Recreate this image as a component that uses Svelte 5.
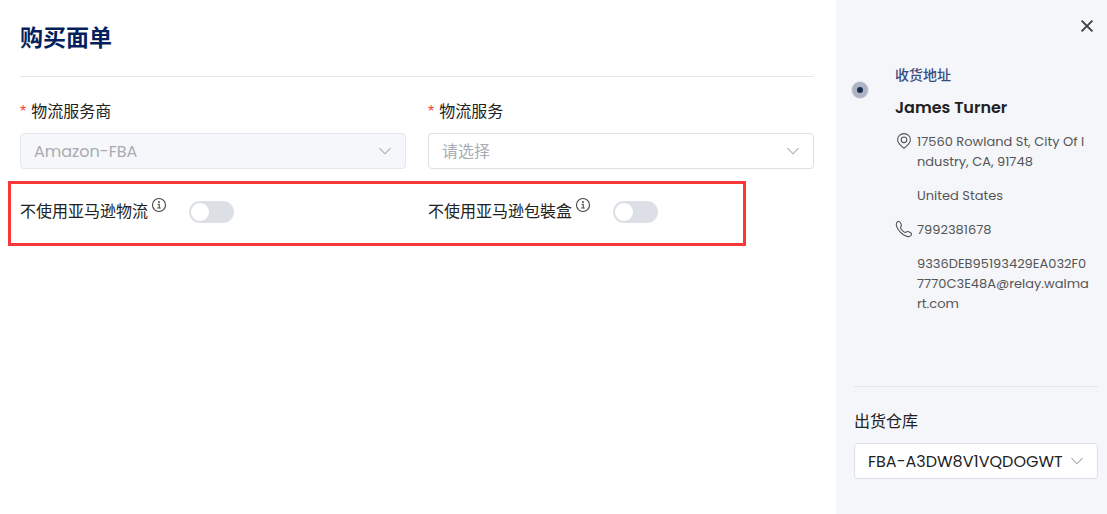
<script>
    let carrier = "Amazon-FBA"
    let service = ""
    let warehouse = "FBA-A3DW8V1VQDOGWT"

    let switches = [
        { id: "no-logistics", label: "不使用亚马逊物流", checked: false },
        { id: "no-box", label: "不使用亚马逊包裝盒", checked: false }
    ]

    const address = {
        name: "James Turner",
        street: "17560 Rowland St, City Of Industry, CA, 91748",
        country: "United States",
        phone: "7992381678",
        email: "9336DEB95193429EA032F07770C3E48A@relay.walmart.com"
    }
</script>

{#snippet arrow()}
    <svg class="arrow" viewBox="0 0 14 14" aria-hidden="true">
        <path d="M1.5 4.2 L7 9.8 L12.5 4.2" />
    </svg>
{/snippet}

<div class="dialog">
    <main>
        <h1>购买面单</h1>

        <form>
            <div class="field">
                <label class="required" for="carrier">物流服务商</label>
                <div class="select">
                    <select id="carrier" bind:value={carrier} disabled>
                        <option>Amazon-FBA</option>
                    </select>
                    {@render arrow()}
                </div>
            </div>
            <div class="field">
                <label class="required" for="service">物流服务</label>
                <div class="select">
                    <select id="service" class:empty={service === ""} bind:value={service}>
                        <option value="">请选择</option>
                    </select>
                    {@render arrow()}
                </div>
            </div>

            <div class="switches">
                {#each switches as item}
                    <div class="switch">
                        <label for={item.id}>{item.label}</label>
                        <svg class="info" viewBox="0 0 16 16" aria-hidden="true">
                            <circle cx="8" cy="8" r="6.5" />
                            <path d="M6.6 7.2 H8.2 V11 M6.3 11 H9.8" />
                            <circle class="fill" cx="8" cy="5" r="0.9" />
                        </svg>
                        <input id={item.id} type="checkbox" role="switch" bind:checked={item.checked}>
                    </div>
                {/each}
            </div>
        </form>
    </main>

    <aside>
        <button class="close" type="button" aria-label="关闭">
            <svg viewBox="0 0 14 14"><path d="M1.6 1.6 L12.4 12.4 M12.4 1.6 L1.6 12.4" /></svg>
        </button>

        <section class="receiver">
            <span class="dot"></span>
            <div class="details">
                <h2>收货地址</h2>
                <h3>{address.name}</h3>
                <div class="line">
                    <svg viewBox="0 0 16 16" aria-hidden="true">
                        <path d="M8 15.4 C5.6 13.4 1.6 10.4 1.6 6.8 A6.4 6.2 0 0 1 14.4 6.8 C14.4 10.4 10.4 13.4 8 15.4 Z" />
                        <circle cx="8" cy="6.8" r="2.8" />
                    </svg>
                    <p>{address.street}</p>
                </div>
                <div class="line">
                    <p>{address.country}</p>
                </div>
                <div class="line">
                    <svg viewBox="0 0 16 16" aria-hidden="true">
                        <path d="M1.2 1.1 C2.3 0 3.6 0.3 4.3 1.5 L5.2 3.2 C5.8 4.4 5.4 5.3 4.5 6 C4.2 6.7 5 8 6.2 9.3 C7.5 10.6 8.9 11.6 9.8 11.4 C10.5 10.5 11.6 10.3 12.7 10.8 L14.6 11.8 C15.7 12.5 15.9 13.7 14.9 14.7 C13.6 15.9 11.6 15.8 9.4 14.7 C6 13 2.7 9.7 1.1 6.4 C0.1 4.3 0 2.3 1.2 1.1 Z" />
                    </svg>
                    <p>{address.phone}</p>
                </div>
                <div class="line">
                    <p>{address.email}</p>
                </div>
            </div>
        </section>

        <section class="warehouse">
            <label for="warehouse">出货仓库</label>
            <div class="select">
                <select id="warehouse" bind:value={warehouse}>
                    <option>FBA-A3DW8V1VQDOGWT</option>
                </select>
                {@render arrow()}
            </div>
        </section>
    </aside>
</div>

<style>
    :global(body) {
        margin: 0;
        background: #fff;
    }

    .dialog {
        display: flex;
        min-height: 100vh;
        font-family: Poppins, Inter, "Noto Sans CJK SC", sans-serif;
        font-size: 16px;
        line-height: 24px;
        color: #222;
    }

    main {
        flex: 1;
        min-width: 0;
        padding: 21px 22px 20px 20px;
    }

    h1 {
        margin: 0;
        padding-bottom: 21px;
        border-bottom: 1px solid #e6e6e6;
        font-size: 23px;
        line-height: 34px;
        font-weight: 700;
        color: #051f5c;
    }

    form {
        display: grid;
        grid-template-columns: 1fr 1fr;
        column-gap: 22px;
        padding-top: 23px;
    }

    .field label,
    .warehouse label {
        display: block;
        margin-bottom: 9px;
    }

    .required::before {
        content: "*";
        margin-right: 5px;
        font-family: "Liberation Sans", sans-serif;
        color: #f5483b;
    }

    .select {
        display: flex;
        align-items: center;
        position: relative;
    }

    select {
        appearance: none;
        width: 100%;
        height: 36px;
        padding: 2px 32px 0 13px;
        border: 1px solid #dcdfe6;
        border-radius: 4px;
        background: #fff;
        font: inherit;
        color: #222;
        opacity: 1;
    }

    select.empty {
        color: #a8abb2;
    }

    select:disabled {
        background: #f5f7fa;
        border-color: #e4e7ed;
        color: #a8abb2;
        opacity: 1;
    }

    .arrow {
        position: absolute;
        right: 14px;
        width: 14px;
        height: 14px;
        fill: none;
        stroke: #a8abb2;
        stroke-width: 1.1;
        pointer-events: none;
    }

    .switches {
        grid-column: 1 / -1;
        display: grid;
        grid-template-columns: 1fr 1fr;
        column-gap: 22px;
        position: relative;
        padding: 28px 0 19px;
    }

    /* highlight frame around both switches */
    .switches::after {
        content: "";
        position: absolute;
        inset: 12px 68px 0 -12px;
        border: 3px solid #fb3737;
        pointer-events: none;
    }

    .switch {
        display: flex;
        align-items: center;
        height: 30px;
    }

    .info {
        align-self: flex-start;
        width: 16px;
        height: 16px;
        margin: 0 22px 0 3px;
        fill: none;
        stroke: #444;
        stroke-width: 1.1;
    }

    .info .fill {
        fill: #444;
        stroke: none;
    }

    input {
        appearance: none;
        display: flex;
        box-sizing: border-box;
        width: 45px;
        height: 22px;
        margin: 0;
        padding: 2px;
        border-radius: 11px;
        background: #dcdfe6;
        cursor: pointer;
    }

    input::before {
        content: "";
        width: 18px;
        height: 18px;
        border-radius: 50%;
        background: #fff;
    }

    input:checked {
        justify-content: flex-end;
        background: #051f5c;
    }

    aside {
        display: flex;
        flex-direction: column;
        box-sizing: border-box;
        width: 271px;
        padding: 16px 9px 20px 16px;
        background: #f4f6fa;
    }

    .close {
        align-self: flex-end;
        display: flex;
        padding: 3px;
        border: 0;
        margin-right: 1px;
        background: none;
        cursor: pointer;
    }

    .close svg {
        width: 14px;
        height: 14px;
        fill: none;
        stroke: #444;
        stroke-width: 2;
    }

    .receiver {
        display: flex;
        gap: 27px;
        min-height: 321px;
        padding-top: 29px;
    }

    .dot {
        flex: none;
        box-sizing: border-box;
        width: 16px;
        height: 16px;
        margin-top: 17px;
        border: 5px solid #aeb4c3;
        border-radius: 50%;
        background: #1c2c55;
        box-shadow: 0 0 0 1px #dfe2ea;
    }

    .details {
        min-width: 0;
    }

    h2 {
        margin: 0 0 11px;
        font-size: 14px;
        line-height: 20px;
        font-weight: 500;
        color: #3a4b7c;
    }

    h3 {
        margin: 0 0 12px;
        font-size: 16px;
        line-height: 24px;
        font-weight: 600;
    }

    .line {
        display: flex;
        margin-bottom: 14px;
        padding: 0 8px 0 22px;
        font-size: 13px;
        line-height: 20px;
        color: #555;
    }

    .line svg {
        flex: none;
        width: 16px;
        height: 16px;
        margin: 1px 5px 0 -21px;
        overflow: visible;
        fill: none;
        stroke: #555;
        stroke-width: 1.1;
    }

    .line p {
        margin: 0;
        word-break: break-all;
    }

    .warehouse {
        margin-left: 2px;
        padding-top: 23px;
        border-top: 1px solid #e6e6e6;
    }
</style>
